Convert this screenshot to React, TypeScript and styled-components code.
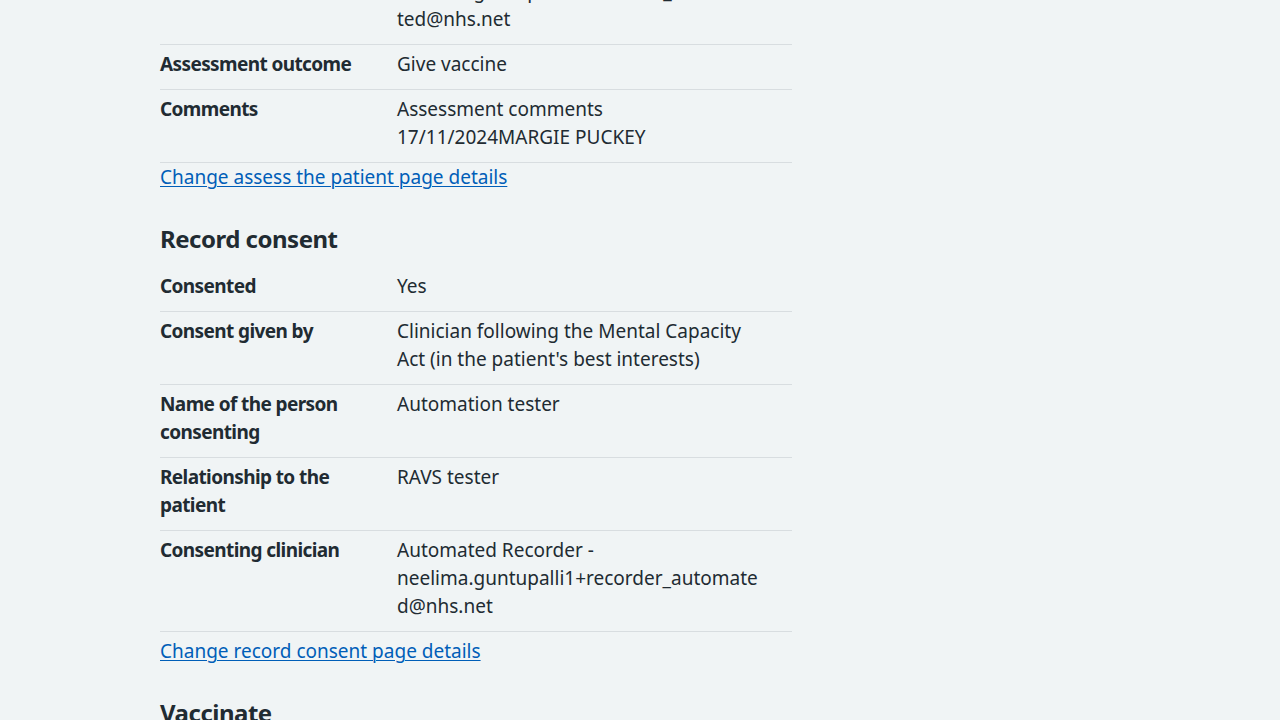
import React from "react";
import styled, { createGlobalStyle } from "styled-components";

const Global = createGlobalStyle`
  html, body { margin: 0; padding: 0; background: #f0f4f5; }
  body {
    font-family: "Noto Sans", "Open Sans", sans-serif;
    color: #212b32;
    -webkit-font-smoothing: antialiased;
  }
`;

const Page = styled.main`
  width: 960px;
  margin: -56px auto 0;
`;

const Column = styled.div`
  width: 632px;
`;

const SummaryList = styled.dl`
  margin: 0;
  font-size: 19px;
  line-height: 28px;
`;

const Row = styled.div`
  display: grid;
  grid-template-columns: 237px 1fr;
  border-bottom: 1px solid #d8dde0;
`;

const Key = styled.dt`
  margin: 0;
  padding: 5px 24px 11px 0;
  font-weight: 700;
  letter-spacing: -0.6px;
`;

const Value = styled.dd`
  margin: 0;
  padding: 5px 24px 11px 0;
  overflow-wrap: anywhere;
`;

const ChangeLink = styled.a<{ $offset?: number }>`
  display: block;
  width: fit-content;
  margin: ${(p) => p.$offset ?? 0}px 0 32px;
  font-size: 19px;
  line-height: 28px;
  color: #005eb8;
  text-decoration: underline;
  text-underline-offset: 2px;
  text-decoration-thickness: 1px;
  &:hover { color: #7c2855; text-decoration-thickness: 3px; }
`;

const SectionHeading = styled.h3`
  margin: 0 0 12px;
  font-size: 24px;
  line-height: 32px;
  font-weight: 700;
  letter-spacing: -0.5px;
`;

type Item = { key: string; value: React.ReactNode };

const assessment: Item[] = [
  {
    key: "Assessing clinician",
    value: (
      <>
        Automated Assessor -<br />
        neelima.guntupalli1+assessor_automa<br />
        ted@nhs.net
      </>
    ),
  },
  { key: "Assessment outcome", value: "Give vaccine" },
  {
    key: "Comments",
    value: (
      <>
        Assessment comments
        <br />
        17/11/2024MARGIE PUCKEY
      </>
    ),
  },
];

const consent: Item[] = [
  { key: "Consented", value: "Yes" },
  {
    key: "Consent given by",
    value: "Clinician following the Mental Capacity Act (in the patient's best interests)",
  },
  { key: "Name of the person consenting", value: "Automation tester" },
  { key: "Relationship to the patient", value: "RAVS tester" },
  {
    key: "Consenting clinician",
    value: (
      <>
        Automated Recorder -<br />
        neelima.guntupalli1+recorder_automate
        <br />
        d@nhs.net
      </>
    ),
  },
];

function Summary({ items }: { items: Item[] }) {
  return (
    <SummaryList>
      {items.map((it) => (
        <Row key={it.key}>
          <Key>{it.key}</Key>
          <Value>{it.value}</Value>
        </Row>
      ))}
    </SummaryList>
  );
}

export default function App() {
  return (
    <>
      <Global />
      <Page>
        <Column>
          <Summary items={assessment} />
          <ChangeLink href="#assess">Change assess the patient page details</ChangeLink>

          <SectionHeading>Record consent</SectionHeading>
          <Summary items={consent} />
          <ChangeLink href="#consent" $offset={5}>
            Change record consent page details
          </ChangeLink>

          <SectionHeading>Vaccinate</SectionHeading>
        </Column>
      </Page>
    </>
  );
}
